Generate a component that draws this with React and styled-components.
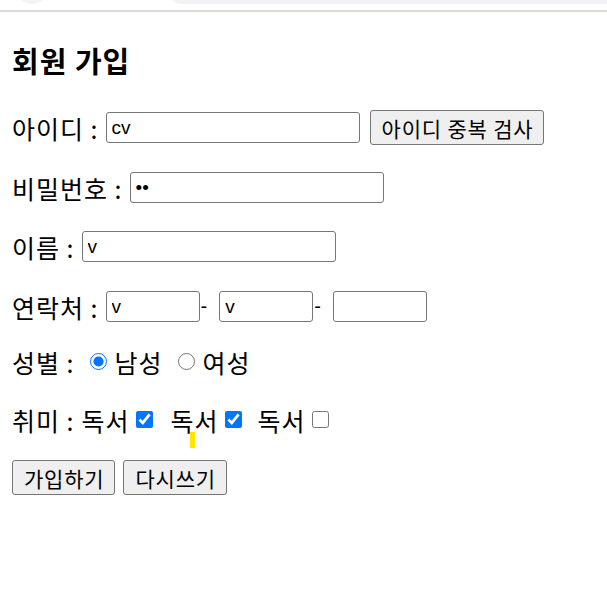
import styled, { createGlobalStyle } from 'styled-components';

const GlobalStyle = createGlobalStyle`
    html, body {
        margin: 0;
        padding: 0;
        background: #FFFFFF;
    }

    body {
        font-family: "Noto Sans CJK KR", "Noto Sans", sans-serif;
        color: #000000;
    }
`;

export default function App() {
    return (
        <>
            <GlobalStyle />
            <BrowserTop>
                <TabDot />
                <AddressBar />
            </BrowserTop>
            <Page>
                <Title>회원 가입</Title>
                <Form>
                    <Row $top={0}>
                        <Label>아이디 :</Label>
                        <TextInput type="text" defaultValue="cv" $width={254} />
                        <Button type="button" $left={10}>아이디 중복 검사</Button>
                    </Row>
                    <Row $top={25}>
                        <Label>비밀번호 :</Label>
                        <TextInput type="password" defaultValue="cv" $width={254} />
                    </Row>
                    <Row $top={24}>
                        <Label>이름 :</Label>
                        <TextInput type="text" defaultValue="v" $width={254} />
                    </Row>
                    <Row $top={25}>
                        <Label>연락처 :</Label>
                        <TextInput type="text" defaultValue="v" $width={94} />
                        <Dash>-</Dash>
                        <TextInput type="text" defaultValue="v" $width={94} />
                        <Dash>-</Dash>
                        <TextInput type="text" defaultValue="" $width={94} />
                    </Row>
                    <Row $top={20}>
                        <Label>성별 :</Label>
                        <Radio type="radio" name="gender" defaultChecked />
                        <Choice>남성</Choice>
                        <Radio type="radio" name="gender" $left={7} />
                        <Choice>여성</Choice>
                    </Row>
                    <Row $top={23}>
                        <Label>취미 :</Label>
                        <Choice>독서</Choice>
                        <Check type="checkbox" defaultChecked />
                        <Choice $left={18}>
                            독서
                            <Caret />
                        </Choice>
                        <Check type="checkbox" defaultChecked />
                        <Choice $left={16}>독서</Choice>
                        <Check type="checkbox" />
                    </Row>
                    <Row $top={23}>
                        <Button type="submit">가입하기</Button>
                        <Button type="reset" $left={8}>다시쓰기</Button>
                    </Row>
                </Form>
            </Page>
        </>
    );
}

// 브라우저 상단
const BrowserTop = styled.div`
    height: 12px;
    border-bottom: 2px solid #DADADA;
    display: flex;
    align-items: flex-end;
    overflow: hidden;
    padding-bottom: 6px;
    box-sizing: border-box;
`;

const TabDot = styled.div`
    width: 32px;
    height: 32px;
    border-radius: 50%;
    background: #F1F3F4;
    margin-left: 16px;
    flex-shrink: 0;
`;

const AddressBar = styled.div`
    flex: 1;
    height: 32px;
    border-radius: 16px 0 0 16px;
    background: #F1F3F4;
    margin-left: 118px;
`;

// 본문
const Page = styled.div`
    padding: 0 12px;
`;

const Title = styled.h2`
    font-size: 29px;
    font-weight: 700;
    letter-spacing: 1px;
    margin: 30px 0 0 0;
    line-height: 36px;
`;

const Form = styled.form`
    display: flex;
    flex-direction: column;
    margin-top: 32px;
`;

const Row = styled.div`
    display: flex;
    align-items: center;
    height: 35px;
    margin-top: ${props => props.$top}px;
    font-size: 25px;
    letter-spacing: 1px;
`;

const Label = styled.span`
    margin-right: 7px;
    white-space: nowrap;
`;

const TextInput = styled.input`
    width: ${props => props.$width}px;
    height: 31px;
    box-sizing: border-box;
    border: 1px solid #767676;
    border-radius: 3px;
    padding: 1px 5px;
    font-family: "Liberation Sans", Arial, sans-serif;
    font-size: 19px;
    letter-spacing: 0;
    color: #000000;
    outline: none;
`;

const Dash = styled.span`
    font-family: "Liberation Sans", Arial, sans-serif;
    font-size: 20px;
    letter-spacing: 0;
    margin: 0 12px 0 1px;
`;

const Button = styled.button`
    height: 35px;
    box-sizing: border-box;
    margin-left: ${props => props.$left || 0}px;
    padding: 0 10px 0 11px;
    background: #EFEFEF;
    border: 1px solid #767676;
    border-radius: 3px;
    font-family: "Noto Sans CJK KR", "Noto Sans", sans-serif;
    font-size: 21px;
    letter-spacing: 0.8px;
    color: #000000;
    align-self: flex-end;
`;

const Radio = styled.input`
    width: 17px;
    height: 17px;
    margin: 0 8px 0 ${props => 8 + (props.$left || 0)}px;
    accent-color: #0075FF;
`;

const Check = styled.input`
    width: 17px;
    height: 17px;
    margin: 0 0 0 6px;
    accent-color: #0075FF;
`;

const Choice = styled.span`
    position: relative;
    margin-left: ${props => props.$left || 0}px;
`;

const Caret = styled.span`
    position: absolute;
    left: 50%;
    top: calc(100% - 6px);
    width: 5px;
    height: 16px;
    margin-left: -5px;
    background: #FFE500;
`;
